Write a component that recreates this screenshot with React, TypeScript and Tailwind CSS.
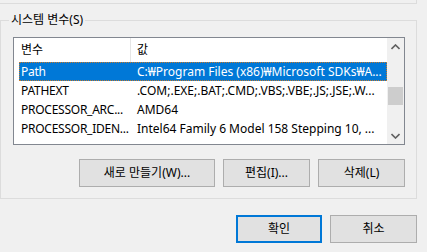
import React from "react";

const ROWS = [
  { name: "Path", value: "C:₩Program Files (x86)₩Microsoft SDKs₩A..." },
  { name: "PATHEXT", value: ".COM;.EXE;.BAT;.CMD;.VBS;.VBE;.JS;.JSE;.W..." },
  { name: "PROCESSOR_ARC...", value: "AMD64" },
  { name: "PROCESSOR_IDEN...", value: "Intel64 Family 6 Model 158 Stepping 10, ..." },
];

function WinButton({ label, width, primary }: { label: string; width: string; primary?: boolean }) {
  return (
    <div
      className={`flex h-[28px] items-center justify-center bg-[#e1e1e1] text-[12px] text-black ${width} ${
        primary ? "border-2 border-[#0078d7]" : "border border-[#adadad]"
      }`}
    >
      {label}
    </div>
  );
}

function Chevron({ up }: { up?: boolean }) {
  return (
    <svg width="9" height="6" viewBox="0 0 9 6" className="block">
      <path
        d={up ? "M0.5 5 L4.5 1 L8.5 5" : "M0.5 1 L4.5 5 L8.5 1"}
        fill="none"
        stroke="#606060"
        strokeWidth="1.6"
      />
    </svg>
  );
}

export default function App() {
  return (
    <div
      className="relative h-[252px] w-[427px] overflow-hidden bg-[#f0f0f0] text-black"
      style={{ fontFamily: '"Noto Sans", "Noto Sans CJK KR", sans-serif' }}
    >
      <div className="h-[4px] w-[417px] border-b border-r border-[#dcdcdc]" />

      <div className="relative mt-[16px] h-[179px] w-[417px] border border-[#dcdcdc] pl-[12px] pt-[16px]">
        <span className="absolute left-[8px] top-[-10px] bg-[#f0f0f0] px-[2px] text-[12px] leading-[18px]">
          시스템 변수(S)
        </span>

        <div className="flex h-[108px] w-[392px] border border-[#828790] bg-white">
          <div className="flex min-w-0 flex-1 flex-col">
            <div className="flex h-[24px] items-center text-[12px]">
              <div className="w-[116px] pl-[7px]">변수</div>
              <div className="h-full w-px bg-[#e5e5e5]" />
              <div className="pl-[6px]">값</div>
            </div>
            {ROWS.map((row, i) => (
              <div
                key={row.name}
                className={`ml-[5px] flex h-[19px] items-center whitespace-nowrap text-[12px] ${
                  i === 0 ? "border border-dotted border-[#c87a2a] bg-[#0078d7] text-white" : "border border-transparent"
                }`}
              >
                <div className="w-[116px] pl-[1px] tracking-[-0.25px]">{row.name}</div>
                <div className="pl-[1px]">{row.value}</div>
              </div>
            ))}
          </div>

          <div className="flex w-[17px] flex-col items-center bg-[#f0f0f0]">
            <div className="flex h-[17px] items-center justify-center">
              <Chevron up />
            </div>
            <div className="mt-[32px] h-[18px] w-[15px] bg-[#cdcdcd]" />
            <div className="flex-1" />
            <div className="flex h-[17px] items-center justify-center">
              <Chevron />
            </div>
          </div>
        </div>

        <div className="mt-[14px] flex w-[392px] justify-end gap-[8px]">
          <WinButton label="새로 만들기(W)..." width="w-[136px]" />
          <WinButton label="편집(I)..." width="w-[87px]" />
          <WinButton label="삭제(L)" width="w-[87px]" />
        </div>
      </div>

      <div className="mt-[16px] flex w-[417px] justify-end gap-[8px]">
        <WinButton label="확인" width="w-[86px]" primary />
        <WinButton label="취소" width="w-[87px]" />
      </div>
    </div>
  );
}
